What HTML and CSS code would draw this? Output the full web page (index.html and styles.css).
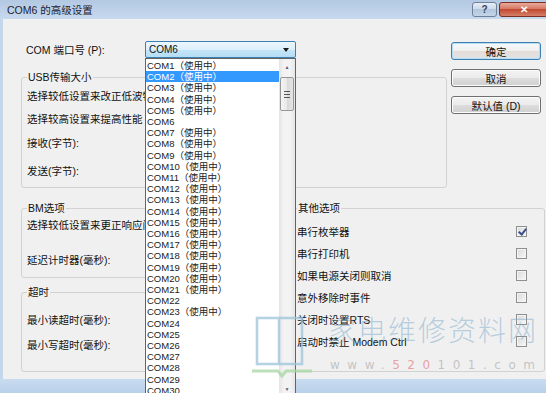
FILE: index.html
```html
<!DOCTYPE html>
<html lang="zh-CN">
<head>
    <meta charset="UTF-8">
    <title>COM6 的高级设置</title>
    <link rel="stylesheet" href="styles.css">
</head>
<body>
    <div class="window">
        <div class="titlebar">
            <span class="title">COM6 的高级设置</span>
            <div class="caption_btns">
                <span class="cap_btn help">?</span>
                <span class="cap_btn close">✕</span>
            </div>
        </div>

        <div class="client">
            <div class="upper">
                <div class="main_col">
                    <div class="port_row">
                        <span class="port_label">COM 端口号 (P):</span>
                        <div class="combo">
                            <span>COM6</span>
                            <span class="combo_arrow"></span>
                        </div>
                    </div>

                    <fieldset class="group usb">
                        <legend>USB传输大小</legend>
                        <div class="usb_rows">
                            <div class="row">选择较低设置来改正低波特率</div>
                            <div class="row">选择较高设置来提高性能</div>
                            <div class="row">接收(字节):</div>
                            <div class="row">发送(字节):</div>
                        </div>
                    </fieldset>
                </div>

                <div class="buttons">
                    <button class="btn default">确定</button>
                    <button class="btn">取消</button>
                    <button class="btn">默认值 (D)</button>
                </div>
            </div>

            <div class="lower">
                <div class="lower_left">
                    <fieldset class="group bm">
                        <legend>BM选项</legend>
                        <div class="row first">选择较低设置来更正响应问题</div>
                        <div class="row delay">延迟计时器(毫秒):</div>
                    </fieldset>

                    <fieldset class="group timeout">
                        <legend>超时</legend>
                        <div class="row read">最小读超时(毫秒):</div>
                        <div class="row write">最小写超时(毫秒):</div>
                    </fieldset>
                </div>

                <fieldset class="group other">
                    <legend>其他选项</legend>
                    <div class="opts">
                        <div class="opt"><span>串行枚举器</span><span class="check checked"></span></div>
                        <div class="opt"><span>串行打印机</span><span class="check"></span></div>
                        <div class="opt"><span>如果电源关闭则取消</span><span class="check"></span></div>
                        <div class="opt"><span>意外移除时事件</span><span class="check"></span></div>
                        <div class="opt"><span>关闭时设置RTS</span><span class="check"></span></div>
                        <div class="opt"><span>启动时禁止 Modem Ctrl</span><span class="check"></span></div>
                    </div>
                </fieldset>
            </div>
        </div>

        <div class="bottom_frame"></div>

        <!-- open dropdown of the port combo -->
        <div class="droplist">
            <div class="items">
                <div class="item">COM1（使用中）</div>
                <div class="item sel">COM2（使用中）</div>
                <div class="item">COM3（使用中）</div>
                <div class="item">COM4（使用中）</div>
                <div class="item">COM5（使用中）</div>
                <div class="item">COM6</div>
                <div class="item">COM7（使用中）</div>
                <div class="item">COM8（使用中）</div>
                <div class="item">COM9（使用中）</div>
                <div class="item">COM10（使用中）</div>
                <div class="item">COM11（使用中）</div>
                <div class="item">COM12（使用中）</div>
                <div class="item">COM13（使用中）</div>
                <div class="item">COM14（使用中）</div>
                <div class="item">COM15（使用中）</div>
                <div class="item">COM16（使用中）</div>
                <div class="item">COM17（使用中）</div>
                <div class="item">COM18（使用中）</div>
                <div class="item">COM19（使用中）</div>
                <div class="item">COM20（使用中）</div>
                <div class="item">COM21（使用中）</div>
                <div class="item">COM22</div>
                <div class="item">COM23（使用中）</div>
                <div class="item">COM24</div>
                <div class="item">COM25</div>
                <div class="item">COM26</div>
                <div class="item">COM27</div>
                <div class="item">COM28</div>
                <div class="item">COM29</div>
                <div class="item">COM30</div>
            </div>
            <div class="scrollbar">
                <div class="sb_btn">▲</div>
                <div class="sb_thumb"><span class="grip"></span></div>
                <div class="sb_btn down">▼</div>
            </div>
        </div>

        <!-- site watermark over the screenshot -->
        <svg class="wm_logo" width="60" height="66" viewBox="0 0 60 66">
            <path d="M5 4 H27 V50 H5 Z" fill="none" stroke="#9cc4da" stroke-width="2.5"/>
            <path d="M27 4 H50 V50 H27" fill="none" stroke="#9cc4da" stroke-width="2.5"/>
            <path d="M0 57 H26 L30 62 L34 57 H60" fill="none" stroke="#a6d6a1" stroke-width="3"/>
        </svg>
        <div class="wm_text">家电维修资料网</div>
        <div class="wm_url">www.<span class="wm_red">520</span>101.com</div>
    </div>
</body>
</html>
```

FILE: styles.css
```css
* {
    box-sizing: border-box;
}

body {
    margin: 0;
    width: 546px;
    height: 393px;
    overflow: hidden;
    font-family: "Liberation Sans", "Noto Sans CJK SC", sans-serif;
    font-size: 10.5px;
    color: #111;
}

.window {
    position: relative;
    width: 546px;
    height: 393px;
    background: #c4d6ea;
    overflow: hidden;
    display: flex;
    flex-direction: column;
}

/* title bar */
.titlebar {
    height: 19px;
    flex: none;
    display: flex;
    justify-content: space-between;
    padding-left: 7px;
    background: linear-gradient(#b3c8e2, #c7d9ee);
}

.title {
    line-height: 20px;
    color: #1b2230;
}

.caption_btns {
    display: flex;
    gap: 2px;
    margin-top: 2px;
    margin-right: -2px;
}

.cap_btn {
    height: 15px;
    display: flex;
    align-items: center;
    justify-content: center;
    border: 1px solid #6f8199;
    border-radius: 3px;
    font-weight: bold;
    font-size: 10px;
    line-height: 1;
}

.help {
    width: 25px;
    color: #34435c;
    background: linear-gradient(#e6eef7, #c9d8e9 50%, #b3c7dd 50%, #c4d5e8);
}

.close {
    width: 49px;
    color: #fff;
    border-color: #7b3026;
    background: linear-gradient(#e9a99a, #d4725e 50%, #c24a31 50%, #d57e69);
}

/* client area */
.client {
    margin-left: 3px;
    height: 360px;
    flex: none;
    background: #f0f0f0;
    padding: 22px 1px 0 18px;
}

.bottom_frame {
    flex: 1;
    background: linear-gradient(#c9dcf0, #b9d0ea);
}

.upper {
    display: flex;
}

.main_col {
    width: 426px;
}

.port_row {
    display: flex;
    align-items: center;
    height: 17px;
    padding-left: 5px;
}

.port_label {
    width: 119px;
    line-height: 14px;
}

.combo {
    width: 151px;
    height: 17px;
    display: flex;
    align-items: center;
    justify-content: space-between;
    padding: 0 6px 0 3px;
    border: 1px solid #3c7fb1;
    border-radius: 2px;
    font-size: 10px;
    background: linear-gradient(#edf7fd, #dcf0fb 50%, #c6e6f8 50%, #b4ddf4);
}

.combo_arrow {
    border-top: 4px solid #1a1a1a;
    border-left: 3.5px solid transparent;
    border-right: 3.5px solid transparent;
}

.buttons {
    margin-left: 4px;
    width: 90px;
    display: flex;
    flex-direction: column;
    gap: 9px;
    padding-top: 1px;
}

.btn {
    height: 18px;
    padding: 0;
    font: inherit;
    color: #111;
    border: 1px solid #707070;
    border-radius: 3px;
    background: linear-gradient(#f3f3f3, #ebebeb 50%, #dddddd 50%, #d0d0d0);
    box-shadow: inset 0 0 0 1px #fbfbfb;
}

.btn.default {
    border-color: #3c7fb1;
    background: linear-gradient(#f7fafc, #eef0f0 50%, #e6dcd6 50%, #dfe4e8);
    box-shadow: inset 0 0 0 1px #b8dcf2;
}

/* group boxes */
.group {
    margin: 0;
    min-width: 0;
    border: 1px solid #d2d2d2;
    border-radius: 3px;
    padding: 0 0 0 5px;
}

.group legend {
    padding: 0 1px;
    line-height: 14px;
}

.row {
    line-height: 14px;
    white-space: nowrap;
}

.usb {
    margin-top: 12px;
    padding-bottom: 1px;
}

.usb_rows {
    display: grid;
    grid-template-rows: 23px 23px 25px 31px;
    align-items: center;
}

.lower {
    display: flex;
    gap: 2px;
    margin-top: 13px;
}

.lower_left {
    width: 268px;
    display: flex;
    flex-direction: column;
}

.bm {
    padding-bottom: 10px;
}

.bm .first {
    line-height: 20px;
}

.bm .delay {
    margin-top: 18px;
}

.timeout {
    margin-top: 7px;
    padding-bottom: 19px;
}

.timeout .read {
    margin-top: 14px;
}

.timeout .write {
    margin-top: 11px;
}

.other {
    flex: 1;
}

.opts {
    padding-top: 5px;
}

.opt {
    display: flex;
    justify-content: space-between;
    align-items: center;
    height: 22px;
    padding-right: 17px;
    white-space: nowrap;
}

.check {
    width: 11px;
    height: 11px;
    border: 1px solid #8e8f8f;
    background: linear-gradient(135deg, #d9d9d9, #f8f8f8);
    box-shadow: inset 0 0 0 1px #f4f4f4;
    position: relative;
}

.check.checked::after {
    content: "";
    position: absolute;
    left: 3px;
    top: 0px;
    width: 3px;
    height: 6px;
    border-right: 2px solid #3a4f86;
    border-bottom: 2px solid #3a4f86;
    transform: rotate(40deg);
}

/* dropdown list */
.droplist {
    position: absolute;
    left: 145px;
    top: 58px;
    width: 151px;
    height: 340px;
    z-index: 2;
    display: flex;
    border: 1px solid #646464;
    background: #fff;
}

.items {
    flex: 1;
    padding-top: 1px;
    font-size: 9.5px;
    line-height: 11.2px;
    color: #222;
}

.item {
    padding-left: 1px;
    white-space: nowrap;
}

.item.sel {
    background: #3399ff;
    color: #fff;
}

.scrollbar {
    width: 16px;
    display: flex;
    flex-direction: column;
    background: linear-gradient(90deg, #e4e4e4, #f3f3f3 30%, #f3f3f3 70%, #e6e6e6);
}

.sb_btn {
    height: 16px;
    display: flex;
    align-items: center;
    justify-content: center;
    font-size: 5px;
    color: #4d6185;
}

.sb_btn.down {
    margin-top: auto;
}

.sb_thumb {
    height: 34px;
    margin: 2px 1px 0;
    border: 1px solid #979797;
    border-radius: 2px;
    display: flex;
    align-items: center;
    justify-content: center;
    background: linear-gradient(90deg, #f4f4f4, #e8e8e8 50%, #d9d9d9 50%, #e4e4e4);
}

.grip {
    width: 6px;
    height: 7px;
    background: repeating-linear-gradient(#555 0 1px, transparent 1px 3px);
}

/* watermark */
.wm_logo {
    position: absolute;
    left: 252px;
    top: 314px;
    z-index: 3;
    opacity: 0.75;
}

.wm_text {
    position: absolute;
    left: 328px;
    top: 312px;
    z-index: 3;
    font-size: 28px;
    line-height: 40px;
    letter-spacing: 2px;
    font-weight: 300;
    color: rgba(110, 160, 198, 0.45);
    white-space: nowrap;
}

.wm_url {
    position: absolute;
    left: 330px;
    top: 358px;
    z-index: 3;
    font-family: "DejaVu Sans", sans-serif;
    font-size: 12px;
    line-height: 14px;
    letter-spacing: 7.5px;
    color: rgba(150, 150, 150, 0.5);
    white-space: nowrap;
}

.wm_red {
    color: rgba(226, 88, 88, 0.55);
}
```
